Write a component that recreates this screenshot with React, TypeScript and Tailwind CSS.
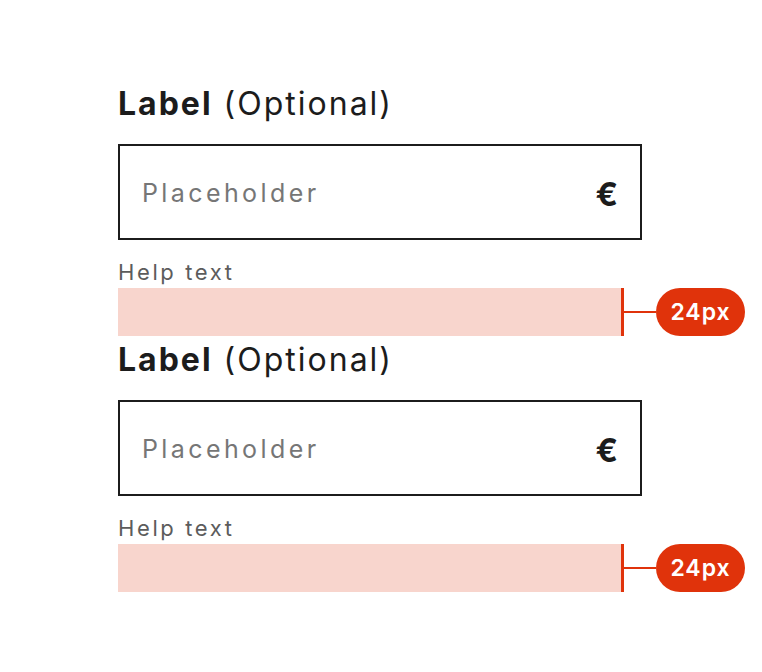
import React from "react";

function Field() {
  return (
    <div className="flex flex-col">
      <div className="h-12 text-[32px] leading-[48px] tracking-[2px] text-[#1c1c1c]">
        <span className="font-bold">Label</span> (Optional)
      </div>
      <div className="mt-4 flex h-24 w-[524px] items-center justify-between border-2 border-[#1c1c1c] bg-white pl-[22px] pr-[22px] pt-1">
        <span className="text-[25px] tracking-[3.4px] text-[#767676]">Placeholder</span>
        <span className="text-[33px] font-bold leading-none text-[#1c1c1c]">€</span>
      </div>
      <div className="mt-4 h-8 text-[22px] leading-8 tracking-[2.6px] text-[#5c5c5c]">Help text</div>
      <div className="flex h-12 items-center">
        <div className="h-12 w-[503px] bg-[#f8d5cd]" />
        <div className="h-12 w-[3px] bg-[#e0330b]" />
        <div className="h-[2px] w-8 bg-[#e0330b]" />
        <div className="flex h-12 w-[89px] items-center justify-center rounded-full bg-[#e0330b] text-[23px] font-semibold tracking-[1px] text-white">
          24px
        </div>
      </div>
    </div>
  );
}

export default function App() {
  return (
    <div className="min-h-[672px] w-full bg-white pl-[118px] pt-20 font-['Inter',sans-serif]">
      <Field />
      <Field />
    </div>
  );
}
